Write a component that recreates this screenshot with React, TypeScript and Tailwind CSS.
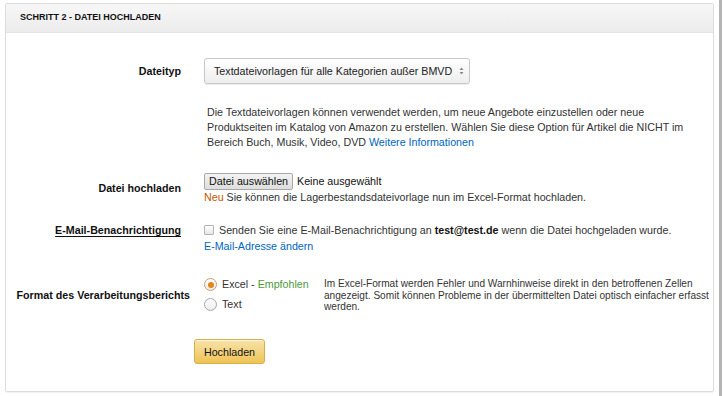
import React from "react";

const font = { fontFamily: '"Liberation Sans", Arial, sans-serif' };

function Label({ children, className = "" }: { children: React.ReactNode; className?: string }) {
  return (
    <div className={`shrink-0 text-right text-[10.7px] font-bold text-[#111] whitespace-nowrap ${className}`}>
      {children}
    </div>
  );
}

function Radio({ checked }: { checked?: boolean }) {
  return (
    <span
      className={`inline-flex w-[13px] h-[13px] rounded-full border items-center justify-center bg-gradient-to-b from-white to-[#ececec] ${
        checked ? "border-[#c9a06a]" : "border-[#a7a7a7]"
      }`}
    >
      {checked && <span className="w-[6px] h-[6px] rounded-full bg-[#e0861e]" />}
    </span>
  );
}

export default function App() {
  return (
    <div className="w-[723px] h-[396px] bg-white flex overflow-hidden text-[#333]" style={font}>
      <div className="w-[719px] pl-[5px] pt-[3px]">
        {/* Panel */}
        <div className="w-[709px] h-[389px] border border-[#dddddd] rounded-[2px] shadow-[0_1px_1px_rgba(0,0,0,0.06)] flex flex-col">
          {/* Header */}
          <div className="h-[29px] shrink-0 bg-gradient-to-b from-[#f7f7f7] to-[#ececec] border-b border-[#e3e3e3] flex items-center pl-[14px]">
            <span className="text-[9px] font-bold text-[#111] uppercase">Schritt 2 - Datei hochladen</span>
          </div>

          {/* Dateityp */}
          <div className="flex items-center mt-[25px]">
            <Label className="w-[175px]">Dateityp</Label>
            <div className="ml-[23px]">
              <div className="h-[26px] w-[266px] rounded-[3px] border border-[#c8c8c8] bg-gradient-to-b from-white to-[#eeeeee] shadow-[0_1px_1px_rgba(0,0,0,0.08)] flex items-center pl-[9px] pr-[5px] justify-between">
                <span className="text-[10.7px] text-[#222] whitespace-nowrap">
                  Textdateivorlagen für alle Kategorien außer BMVD
                </span>
                <svg width="5" height="8" viewBox="0 0 5 8">
                  <path d="M2.5 0.5 L4.5 3 L0.5 3 Z" fill="#888" />
                  <path d="M2.5 7.5 L4.5 5 L0.5 5 Z" fill="#888" />
                </svg>
              </div>
            </div>
          </div>

          {/* Description */}
          <div className="ml-[201px] mt-[21px] text-[10.7px] leading-[15px] text-[#333] whitespace-nowrap">
            Die Textdateivorlagen können verwendet werden, um neue Angebote einzustellen oder neue
            <br />
            Produktseiten im Katalog von Amazon zu erstellen. Wählen Sie diese Option für Artikel die NICHT im
            <br />
            Bereich Buch, Musik, Video, DVD <span className="text-[#0066c0]">Weitere Informationen</span>
          </div>

          {/* Datei hochladen */}
          <div className="flex items-center mt-[22px]">
            <Label className="w-[175px]">Datei hochladen</Label>
            <div className="ml-[23px] flex flex-col">
              <div className="flex items-center h-[18px]">
                <span className="h-[17px] px-[4px] border border-[#a9a9a9] rounded-[2px] bg-gradient-to-b from-[#f3f3f3] to-[#dedede] text-[10.7px] text-[#111] flex items-center">
                  Datei auswählen
                </span>
                <span className="ml-[4px] text-[10.7px] text-[#111]">Keine ausgewählt</span>
              </div>
              <div className="text-[10.7px] leading-[15px] text-[#333] whitespace-nowrap">
                <span className="text-[#c45500]">Neu</span> Sie können die Lagerbestandsdateivorlage nun im Excel-Format
                hochladen.
              </div>
            </div>
          </div>

          {/* E-Mail */}
          <div className="flex items-start mt-[17px]">
            <Label className="w-[175px] leading-[16px]">
              <span className="underline underline-offset-[2px]">E-Mail-Benachrichtigung</span>
            </Label>
            <div className="ml-[23px] flex flex-col text-[10.7px] leading-[16px]">
              <div className="flex items-center whitespace-nowrap">
                <span className="w-[10px] h-[10px] border border-[#b3b3b3] rounded-[1px] bg-gradient-to-b from-white to-[#e6e6e6]" />
                <span className="ml-[5px]">
                  Senden Sie eine E-Mail-Benachrichtigung an <b className="text-[#111]">test@test.de</b> wenn die Datei
                  hochgeladen wurde.
                </span>
              </div>
              <span className="text-[#0066c0]">E-Mail-Adresse ändern</span>
            </div>
          </div>

          {/* Format */}
          <div className="flex items-center mt-[24px]">
            <Label className="w-[184px]">Format des Verarbeitungsberichts</Label>
            <div className="ml-[14px] flex items-start">
              <div className="flex flex-col gap-[7px] w-[120px] text-[10.7px] leading-[13px]">
                <div className="flex items-center gap-[5px]">
                  <Radio checked />
                  <span>
                    Excel - <span className="text-[#4e9a3c]">Empfohlen</span>
                  </span>
                </div>
                <div className="flex items-center gap-[5px]">
                  <Radio />
                  <span>Text</span>
                </div>
              </div>
              <div className="text-[10.1px] leading-[11.5px] text-[#333] whitespace-nowrap">
                Im Excel-Format werden Fehler und Warnhinweise direkt in den betroffenen Zellen
                <br />
                angezeigt. Somit können Probleme in der übermittelten Datei optisch einfacher erfasst
                <br />
                werden.
              </div>
            </div>
          </div>

          {/* Button */}
          <div className="ml-[188px] mt-[26px]">
            <button className="h-[25px] w-[71px] rounded-[3px] border border-[#d6b04c] bg-gradient-to-b from-[#f8e3a9] to-[#efc352] shadow-[0_1px_0_rgba(255,255,255,0.6)_inset] text-[10.7px] text-[#111]">
              Hochladen
            </button>
          </div>
        </div>
      </div>
      <div className="w-[3px] h-full bg-[#b4b4b4]" />
    </div>
  );
}
